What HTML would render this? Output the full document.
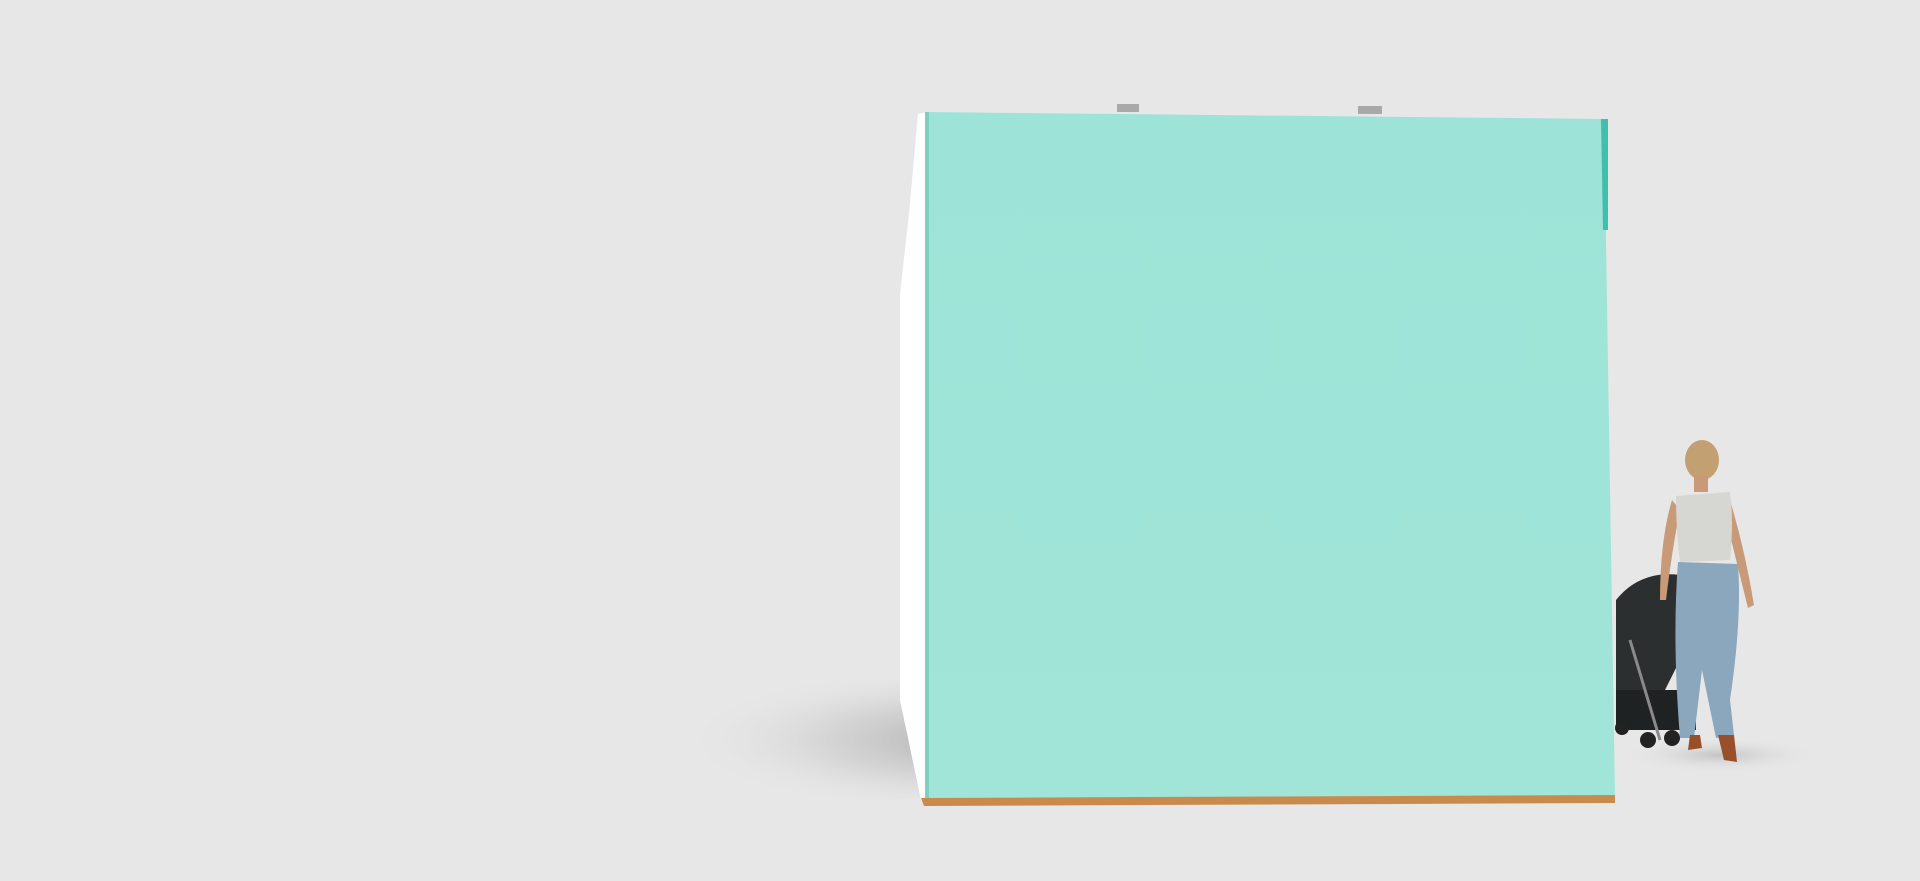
<!DOCTYPE html>
<html><head><style>html,body{margin:0;padding:0;background:#e7e7e7;overflow:hidden}svg{display:block}</style></head>
<body>
<svg width="1920" height="881" viewBox="0 0 1920 881" xmlns="http://www.w3.org/2000/svg">
<defs>
<radialGradient id="sh" cx="0.8" cy="0.5" r="0.6">
<stop offset="0" stop-color="#9a9a9a" stop-opacity="0.75"/>
<stop offset="0.5" stop-color="#bdbdbd" stop-opacity="0.45"/>
<stop offset="1" stop-color="#e7e7e7" stop-opacity="0"/>
</radialGradient>
<linearGradient id="pn" x1="0" y1="0" x2="0" y2="1">
<stop offset="0" stop-color="#9de3d7"/><stop offset="1" stop-color="#a1e5d8"/>
</linearGradient>
<radialGradient id="fs" cx="0.5" cy="0.5" r="0.5">
<stop offset="0" stop-color="#c4c4c4"/><stop offset="1" stop-color="#e7e7e7" stop-opacity="0"/>
</radialGradient>
</defs>
<rect width="1920" height="881" fill="#e7e7e7"/>
<ellipse cx="830" cy="740" rx="250" ry="62" fill="url(#sh)"/>
<ellipse cx="1720" cy="755" rx="100" ry="18" fill="url(#fs)"/>
<polygon points="918,114 909,214 900,294 900,700 921,800 928,800 928,112" fill="#ffffff"/>
<polygon points="925,112 1604,119 1615,797 925,802" fill="url(#pn)"/>
<rect x="925" y="112" width="4" height="690" fill="#7fcfc0"/>
<polygon points="1601,119 1608,119 1608,230 1603,230" fill="#3fbfad"/>
<polygon points="921,798 1615,795 1615,803 924,806" fill="#c98a4e"/>
<rect x="1117" y="104" width="22" height="8" fill="#a9a9a9"/>
<rect x="1358" y="106" width="24" height="8" fill="#a9a9a9"/>
<path d="M1616,600 Q1640,570 1680,575 L1690,640 L1660,700 L1616,700 Z" fill="#2b2f2f"/>
<rect x="1616" y="690" width="80" height="40" fill="#1f2222"/>
<line x1="1630" y1="640" x2="1660" y2="740" stroke="#8a8a8a" stroke-width="3"/>
<circle cx="1622" cy="728" r="7" fill="#222"/><circle cx="1648" cy="740" r="8" fill="#222"/><circle cx="1672" cy="738" r="8" fill="#222"/>
<path d="M1672,500 Q1660,540 1660,600 L1666,600 Q1672,550 1680,510 Z" fill="#c99a78"/>
<path d="M1730,500 Q1745,550 1754,605 L1748,608 Q1736,560 1724,510 Z" fill="#c99a78"/>
<ellipse cx="1702" cy="460" rx="17" ry="20" fill="#c2a071"/>
<rect x="1694" y="476" width="14" height="16" fill="#c99a78"/>
<path d="M1676,496 L1730,492 Q1734,520 1730,560 L1680,562 Q1676,530 1676,496 Z" fill="#d6d6d3"/>
<path d="M1678,562 L1738,564 Q1742,620 1730,700 L1734,735 L1716,738 L1702,670 L1694,738 L1680,738 Q1672,640 1678,562 Z" fill="#8aa7bd"/>
<path d="M1690,735 L1700,735 L1702,748 L1688,750 Z" fill="#9a4f2b"/>
<path d="M1718,735 L1734,735 L1737,762 L1724,760 Z" fill="#9a4f2b"/>
</svg>
</body></html>
